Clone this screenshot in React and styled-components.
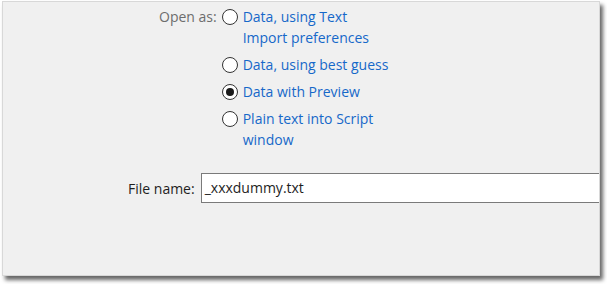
import React from 'react';
import styled, { createGlobalStyle } from 'styled-components';

const GlobalStyle = createGlobalStyle`
  html, body {
    margin: 0;
    padding: 0;
    background: #ffffff;
  }
  body {
    font-family: 'Open Sans', 'Noto Sans', sans-serif;
    font-size: 14px;
  }
`;

const options = [
  { id: 'text', label: ['Data, using Text', 'Import preferences'] },
  { id: 'guess', label: ['Data, using best guess'] },
  { id: 'preview', label: ['Data with Preview'], checked: true },
  { id: 'script', label: ['Plain text into Script', 'window'] },
];

export default function App() {
  return (
    <>
      <GlobalStyle />
      <Stage>
        <Dialog>
          <OpenAs>
            <FieldLabel $muted>Open as:</FieldLabel>
            <RadioList>
              {options.map(option => (
                <RadioRow key={option.id}>
                  <Radio $checked={option.checked} />
                  <RadioText>
                    {option.label.map(line => (
                      <span key={line}>{line}</span>
                    ))}
                  </RadioText>
                </RadioRow>
              ))}
            </RadioList>
          </OpenAs>

          <FileRow>
            <FieldLabel>File name:</FieldLabel>
            <FileInput>_xxxdummy.txt</FileInput>
          </FileRow>
        </Dialog>
      </Stage>
    </>
  );
}

const Stage = styled.div`
  width: 607px;
  height: 284px;
  padding: 1px 0 0 2px;
  box-sizing: border-box;
  overflow: hidden;
`;

const Dialog = styled.div`
  width: 598px;
  height: 275px;
  box-sizing: border-box;
  background: #f0f0f0;
  border: 1px solid #d8d8d8;
  box-shadow: 3px 4px 4px rgba(0, 0, 0, 0.6);
  overflow: hidden;
  padding-top: 4px;
`;

const OpenAs = styled.div`
  display: flex;
  align-items: flex-start;
  padding-left: 156px;
  gap: 5px;
`;

const FieldLabel = styled.span`
  color: ${props => (props.$muted ? '#6d6d6d' : '#1e1e1e')};
  line-height: 21px;
  white-space: nowrap;
`;

const RadioList = styled.div`
  display: flex;
  flex-direction: column;
  gap: 6px;
`;

const RadioRow = styled.div`
  display: flex;
  align-items: flex-start;
  gap: 5px;
`;

const Radio = styled.span`
  flex: 0 0 auto;
  width: 16px;
  height: 16px;
  margin-top: 3px;
  box-sizing: border-box;
  border: 1px solid #333333;
  border-radius: 50%;
  background: #ffffff;
  display: flex;
  align-items: center;
  justify-content: center;

  &::after {
    content: '';
    width: 8px;
    height: 8px;
    border-radius: 50%;
    background: #1a1a1a;
    display: ${props => (props.$checked ? 'block' : 'none')};
  }
`;

const RadioText = styled.span`
  display: flex;
  flex-direction: column;
  color: #1668c9;
  line-height: 21px;
`;

const FileRow = styled.div`
  display: flex;
  align-items: center;
  gap: 6px;
  margin-top: 23px;
  padding-left: 125px;
`;

const FileInput = styled.div`
  flex: 0 0 auto;
  width: 420px;
  height: 30px;
  box-sizing: border-box;
  border: 1px solid #7a7a7a;
  background: #ffffff;
  color: #1e1e1e;
  line-height: 28px;
  padding-left: 3px;
`;
